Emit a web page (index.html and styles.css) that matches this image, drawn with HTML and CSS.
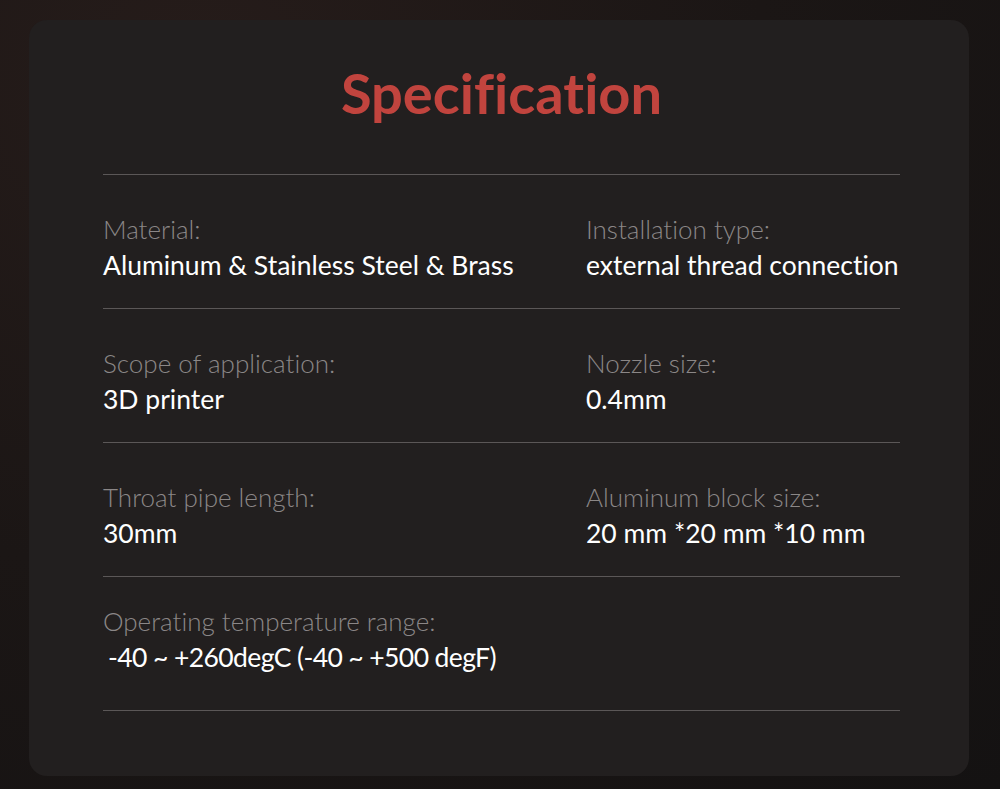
FILE: index.html
```html
<!DOCTYPE html>
<html>
<head>
<meta charset="utf-8">
<link rel="stylesheet" href="styles.css">
</head>
<body>
<div class="page">
  <div class="card">
    <h1 class="title">Specification</h1>
    <div class="rows">
      <div class="row">
        <div class="cell"><div class="label">Material:</div><div class="value">Aluminum &amp; Stainless Steel &amp; Brass</div></div>
        <div class="cell"><div class="label">Installation type:</div><div class="value">external thread connection</div></div>
      </div>
      <div class="row">
        <div class="cell"><div class="label">Scope of application:</div><div class="value">3D printer</div></div>
        <div class="cell"><div class="label">Nozzle size:</div><div class="value">0.4mm</div></div>
      </div>
      <div class="row">
        <div class="cell"><div class="label">Throat pipe length:</div><div class="value">30mm</div></div>
        <div class="cell"><div class="label">Aluminum block size:</div><div class="value">20 mm *20 mm *10 mm</div></div>
      </div>
      <div class="row last">
        <div class="cell"><div class="label">Operating temperature range:</div><div class="value temp">-40 ~ +260degC (-40 ~ +500 degF)</div></div>
      </div>
    </div>
  </div>
</div>
</body>
</html>
```
FILE: styles.css
```css
* { box-sizing: border-box; }
html, body { margin: 0; padding: 0; }
body {
  width: 1000px;
  height: 789px;
  overflow: hidden;
  background: radial-gradient(ellipse at 20% 10%, #261c1a 0%, #1b1615 50%, #141212 100%);
  font-family: Lato, "Noto Sans", sans-serif;
  font-variant-ligatures: none;
}
.page {
  padding: 20px 31px 13px 29px;
}
.card {
  background: #221f1f;
  border-radius: 18px;
  height: 756px;
  padding: 43px 69px 0 74px;
}
.title {
  margin: 0;
  text-align: center;
  color: #c1443e;
  font-size: 56px;
  font-weight: 700;
  line-height: 60px;
  height: 111px;
}
.rows {
  border-top: 1px solid #5b5757;
}
.row {
  display: grid;
  grid-template-columns: 483px 1fr;
  height: 134px;
  border-bottom: 1px solid #5b5757;
  padding-top: 39px;
}
.row.last { padding-top: 29px; }
.label {
  color: #8b8787;
  font-size: 26px;
  font-weight: 300;
  line-height: 30px;
}
.value {
  color: #ffffff;
  font-size: 26.5px;
  font-weight: 400;
  line-height: 30px;
  margin-top: 6px;
}
.value.temp {
  padding-left: 5px;
  letter-spacing: -0.6px;
}
```
